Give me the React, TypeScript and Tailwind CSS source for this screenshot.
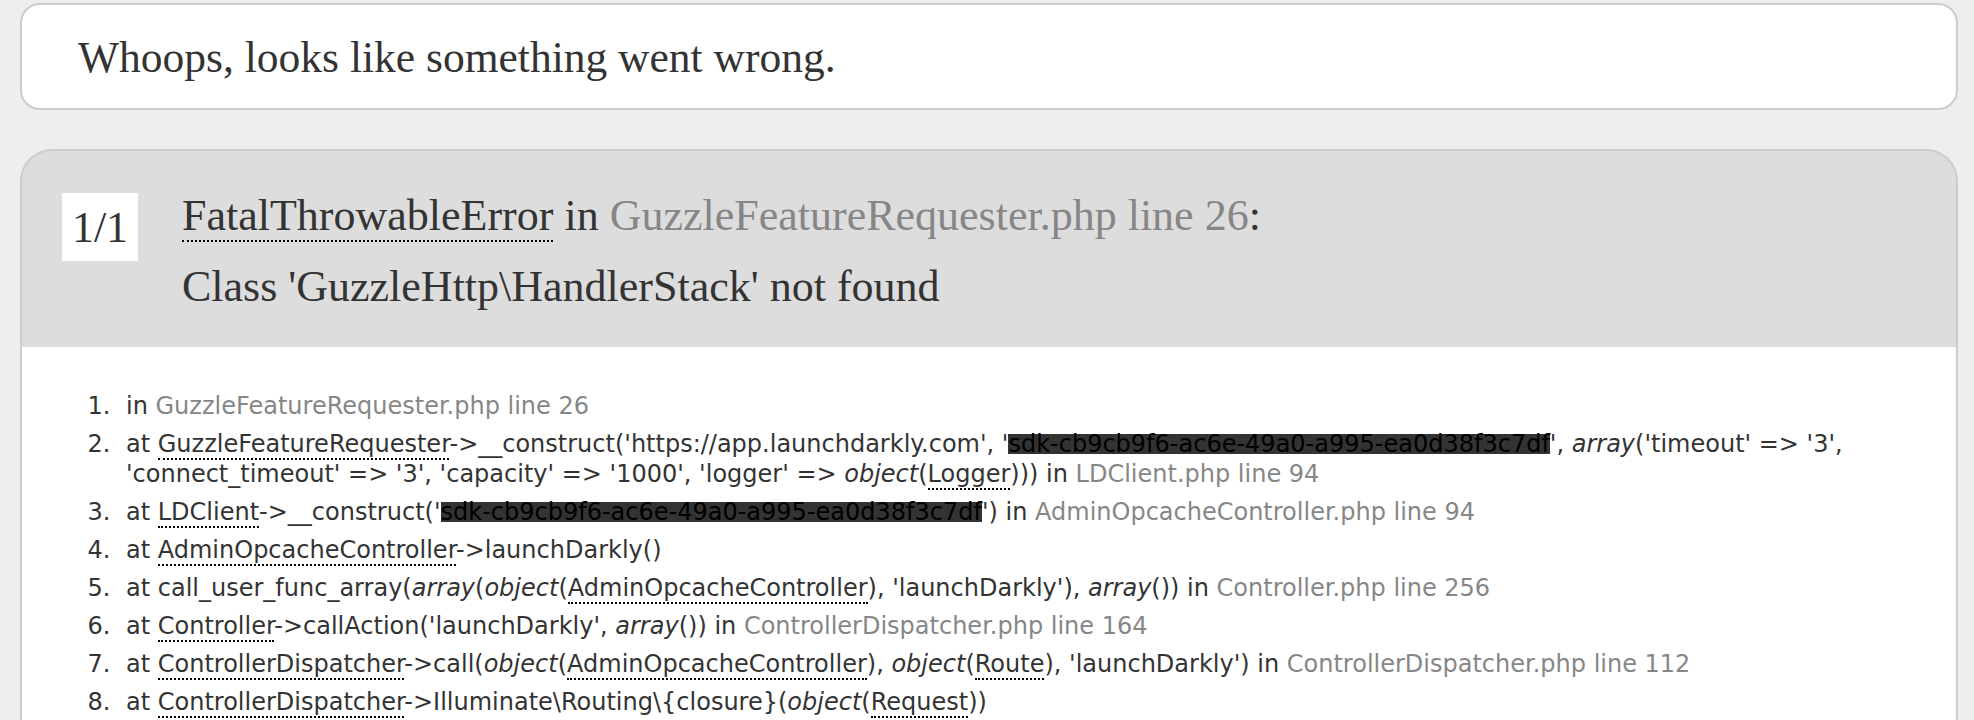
import React from "react";

const Abbr = ({ children }: { children: React.ReactNode }) => (
  <abbr className="no-underline border-b-2 border-dotted border-black">{children}</abbr>
);
const Gray = ({ children }: { children: React.ReactNode }) => (
  <a className="text-[#868686]">{children}</a>
);
const Em = ({ children }: { children: React.ReactNode }) => <em className="italic">{children}</em>;
const Redacted = ({ children }: { children: React.ReactNode }) => (
  <span className="text-black bg-[linear-gradient(to_bottom,transparent_14%,#333_14%,#333_85%,transparent_85%)]">
    {children}
  </span>
);

const KEY = "sdk-cb9cb9f6-ac6e-49a0-a995-ea0d38f3c7df";

export default function App() {
  return (
    <div className="min-h-screen bg-[#eee] pt-[3px] pl-[20px] pr-[16px] text-[#333]">
      <h1 className="bg-white border-2 border-[#ccc] rounded-[20px] px-[56px] pt-[32px] pb-[30px] font-['Liberation_Serif',serif] text-[43.5px] leading-[41px] mb-[39px]">
        Whoops, looks like something went wrong.
      </h1>
      <h2 className="flow-root bg-[#ddd] border-2 border-b-0 border-[#ccc] rounded-t-[32px] px-[40px] pt-[40px] pb-[39px] font-['Liberation_Serif',serif] text-[44px]">
        <span className="float-left mt-[2px] w-[76px] h-[68px] bg-white text-center leading-[70px]">1/1</span>
        <span className="block ml-[120px] mb-[29px] pt-[4px] leading-[42px]">
          <Abbr>FatalThrowableError</Abbr> in <Gray>GuzzleFeatureRequester.php line 26</Gray>:
        </span>
        <span className="block ml-[120px] leading-[42px]">Class 'GuzzleHttp\HandlerStack' not found</span>
      </h2>
      <div className="bg-white border-2 border-t-0 border-[#ccc] rounded-b-[32px] px-[56px] py-[20px]">
        <ol className="list-decimal py-[20px] font-['DejaVu_Sans',sans-serif] text-[24px] leading-[30px]">
          <li className="ml-[40px] px-[8px] py-[4px]">
            in <Gray>GuzzleFeatureRequester.php line 26</Gray>
          </li>
          <li className="ml-[40px] px-[8px] py-[4px]">
            at <Abbr>GuzzleFeatureRequester</Abbr>-&gt;__construct('https://app.launchdarkly.com', '
            <Redacted>{KEY}</Redacted>', <Em>array</Em>('timeout' =&gt; '3', 'connect_timeout' =&gt; '3',
            'capacity' =&gt; '1000', 'logger' =&gt; <Em>object</Em>(<Abbr>Logger</Abbr>))) in{" "}
            <Gray>LDClient.php line 94</Gray>
          </li>
          <li className="ml-[40px] px-[8px] py-[4px]">
            at <Abbr>LDClient</Abbr>-&gt;__construct('<Redacted>{KEY}</Redacted>') in{" "}
            <Gray>AdminOpcacheController.php line 94</Gray>
          </li>
          <li className="ml-[40px] px-[8px] py-[4px]">
            at <Abbr>AdminOpcacheController</Abbr>-&gt;launchDarkly()
          </li>
          <li className="ml-[40px] px-[8px] py-[4px]">
            at call_user_func_array(<Em>array</Em>(<Em>object</Em>(<Abbr>AdminOpcacheController</Abbr>),
            'launchDarkly'), <Em>array</Em>()) in <Gray>Controller.php line 256</Gray>
          </li>
          <li className="ml-[40px] px-[8px] py-[4px]">
            at <Abbr>Controller</Abbr>-&gt;callAction('launchDarkly', <Em>array</Em>()) in{" "}
            <Gray>ControllerDispatcher.php line 164</Gray>
          </li>
          <li className="ml-[40px] px-[8px] py-[4px]">
            at <Abbr>ControllerDispatcher</Abbr>-&gt;call(<Em>object</Em>(<Abbr>AdminOpcacheController</Abbr>),{" "}
            <Em>object</Em>(<Abbr>Route</Abbr>), 'launchDarkly') in{" "}
            <Gray>ControllerDispatcher.php line 112</Gray>
          </li>
          <li className="ml-[40px] px-[8px] py-[4px]">
            at <Abbr>ControllerDispatcher</Abbr>-&gt;Illuminate\Routing\{"{"}closure{"}"}(<Em>object</Em>(
            <Abbr>Request</Abbr>))
          </li>
        </ol>
      </div>
    </div>
  );
}
